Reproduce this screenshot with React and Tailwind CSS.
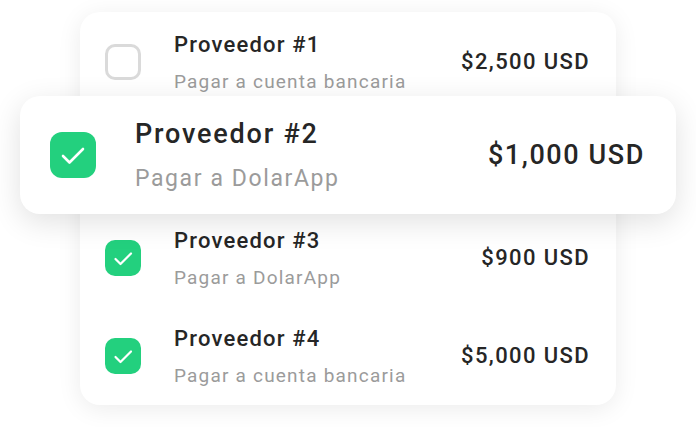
function Check({ checked, big }) {
  if (!checked) {
    return (
      <div className="w-[36px] h-[36px] shrink-0 rounded-[10px] border-[3px] border-[#dadada] bg-white" />
    );
  }
  if (big) {
    return (
      <div className="w-[46px] h-[46px] shrink-0 rounded-[12px] bg-[#23d07e]">
        <svg viewBox="0 0 46 46" className="w-[46px] h-[46px]" fill="none" stroke="white" strokeWidth="2.6" strokeLinecap="round" strokeLinejoin="round">
          <polyline points="13,24 19.5,30.5 33,17" />
        </svg>
      </div>
    );
  }
  return (
    <div className="w-[36px] h-[36px] shrink-0 rounded-[10px] bg-[#23d07e]">
      <svg viewBox="0 0 36 36" className="w-[36px] h-[36px]" fill="none" stroke="white" strokeWidth="2.2" strokeLinecap="round" strokeLinejoin="round">
        <polyline points="10.5,19 15.5,24 26,13.5" />
      </svg>
    </div>
  );
}

function Row({ title, sub, amount, checked }) {
  return (
    <div className="h-[98px] flex items-center pl-[25px] pr-[26px]">
      <Check checked={checked} />
      <div className="ml-[33px] flex flex-col gap-[12px]">
        <span className="text-[22px] leading-[26px] font-medium text-[#262626] tracking-[1.2px]">{title}</span>
        <span className="text-[19px] leading-[23px] text-[#9b9b9b] tracking-[1.2px]">{sub}</span>
      </div>
      <span className="ml-auto text-[22px] leading-[26px] font-medium text-[#262626] tracking-[1.4px]">{amount}</span>
    </div>
  );
}

export default function App() {
  return (
    <div
      className="relative w-[696px] h-[427px] bg-white overflow-hidden"
      style={{ fontFamily: "Roboto, 'Noto Sans', sans-serif" }}
    >
      <div className="ml-[80px] mt-[12px] w-[536px] h-[393px] pt-[1px] rounded-[20px] bg-white shadow-[0_4px_24px_rgba(0,0,0,0.08)]">
        <Row title="Proveedor #1" sub="Pagar a cuenta bancaria" amount="$2,500 USD" />
        {/* row 2 sits under the raised card */}
        <div className="h-[98px]" />
        <Row title="Proveedor #3" sub="Pagar a DolarApp" amount="$900 USD" checked />
        <Row title="Proveedor #4" sub="Pagar a cuenta bancaria" amount="$5,000 USD" checked />
      </div>

      <div className="absolute left-[20px] top-[96px] w-[656px] h-[118px] rounded-[20px] bg-white shadow-[0_8px_30px_rgba(0,0,0,0.12)] flex items-center pl-[30px] pr-[31px]">
        <Check checked big />
        <div className="ml-[39px] flex flex-col gap-[15px]">
          <span className="text-[27px] leading-[32px] font-medium text-[#262626] tracking-[1.8px]">Proveedor #2</span>
          <span className="text-[23px] leading-[28px] text-[#9b9b9b] tracking-[1.6px]">Pagar a DolarApp</span>
        </div>
        <span className="ml-auto text-[27px] leading-[32px] font-medium text-[#262626] tracking-[1.6px]">$1,000 USD</span>
      </div>
    </div>
  );
}
